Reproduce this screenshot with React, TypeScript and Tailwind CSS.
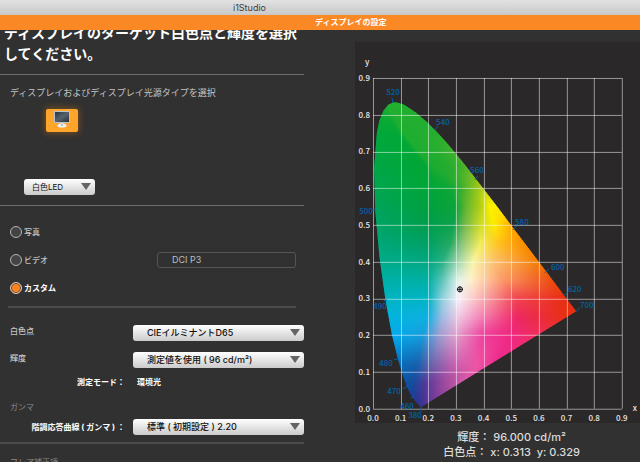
import type { ReactNode } from "react";
import clsx from "clsx";

type Point = [number, number];
type Stop = [number, string];

interface ColorRow {
  y: number;
  stops: Stop[];
}

// Plot area inside the 285x381 chart: 0.1 is 27.67 wide and 36.78 high.
const px = (x: number) => 18 + x * 276.7;
const py = (y: number) => 367 - y * 367.8;

// CIE 1931 spectral locus
const LOCUS: Point[] = [
  [0.1741, 0.005], [0.1714, 0.0051], [0.1644, 0.0109], [0.1566, 0.0177], [0.144, 0.0297],
  [0.1355, 0.0399], [0.1241, 0.0578], [0.1096, 0.0868], [0.0913, 0.1327], [0.0687, 0.2007],
  [0.0454, 0.295], [0.0235, 0.4127], [0.0082, 0.5384], [0.0039, 0.6548], [0.0139, 0.7502],
  [0.0235, 0.785], [0.0389, 0.812], [0.0555, 0.827], [0.0743, 0.8338], [0.094, 0.832],
  [0.1142, 0.8262], [0.1547, 0.8059], [0.1929, 0.7816], [0.2296, 0.7543], [0.2658, 0.7243],
  [0.3016, 0.6923], [0.3373, 0.6589], [0.3731, 0.6245], [0.4087, 0.5896], [0.4441, 0.5547],
  [0.4788, 0.5202], [0.5125, 0.4866], [0.5448, 0.4544], [0.5752, 0.4242], [0.627, 0.3725],
  [0.6658, 0.334], [0.6915, 0.3083], [0.7079, 0.292], [0.7347, 0.2653],
];

const ROWS: ColorRow[] = [
  { y: 0.84, stops: [[0, "#10ab34"], [0.03, "#1eae30"], [0.04, "#22b030"], [0.1, "#22b030"], [0.2, "#22b030"], [0.3, "#22b030"], [0.4, "#22b030"]] },
  { y: 0.75, stops: [[0, "#00a83a"], [0.09, "#02a836"], [0.11, "#1eae30"], [0.16, "#22ae30"], [0.2, "#22ae30"], [0.26, "#26ae2e"], [0.36, "#30b02c"]] },
  { y: 0.66, stops: [[0, "#00a646"], [0.19, "#02a634"], [0.21, "#1cac30"], [0.27, "#22ac30"], [0.32, "#3cb02c"], [0.36, "#6cba24"], [0.42, "#a0cc18"]] },
  { y: 0.6, stops: [[0, "#00a650"], [0.2, "#00a638"], [0.28, "#0ca636"], [0.32, "#38ac2e"], [0.36, "#7cbe22"], [0.4, "#b8d010"], [0.45, "#e8e400"]] },
  { y: 0.55, stops: [[0, "#00a45a"], [0.2, "#00a03e"], [0.3, "#0ca438"], [0.34, "#68b82e"], [0.39, "#b4d014"], [0.42, "#fcf000"], [0.48, "#fff000"]] },
  { y: 0.5, stops: [[0, "#00a568"], [0.2, "#009e4c"], [0.29, "#0ca24c"], [0.33, "#70b84c"], [0.39, "#d0dc24"], [0.44, "#ffec00"], [0.5, "#ffa800"]] },
  { y: 0.45, stops: [[0, "#00a87a"], [0.2, "#00a064"], [0.28, "#24aa60"], [0.32, "#88c47c"], [0.39, "#f4ec58"], [0.45, "#ffc424"], [0.54, "#fc9000"]] },
  { y: 0.4, stops: [[0, "#00ac8c"], [0.2, "#00a880"], [0.25, "#28b084"], [0.31, "#a4d8b0"], [0.36, "#f8f4a8"], [0.44, "#fcc070"], [0.6, "#f47c00"]] },
  { y: 0.35, stops: [[0, "#00b0a8"], [0.2, "#00b0a4"], [0.25, "#5cc4b8"], [0.31, "#e4f4ec"], [0.355, "#fff0cc"], [0.47, "#fc9868"], [0.65, "#ec4c0c"]] },
  { y: 0.3, stops: [[0, "#00b4c0"], [0.2, "#00b4c4"], [0.25, "#90d0dc"], [0.31, "#f8f0fa"], [0.37, "#fcc4c4"], [0.52, "#f04450"], [0.7, "#e82c10"]] },
  { y: 0.25, stops: [[0.05, "#00b4dc"], [0.2, "#10b0e0"], [0.25, "#a0bce4"], [0.31, "#f0c8e4"], [0.4, "#f47cb0"], [0.52, "#ee2864"], [0.7, "#e83010"]] },
  { y: 0.2, stops: [[0.06, "#00acf0"], [0.18, "#189cdc"], [0.24, "#9c9cd0"], [0.3, "#e0a0cc"], [0.4, "#f03c9c"], [0.5, "#ee2880"], [0.65, "#f03048"]] },
  { y: 0.12, stops: [[0.08, "#0070bc"], [0.16, "#1860ac"], [0.22, "#7464ac"], [0.3, "#cc60b0"], [0.38, "#f054a4"], [0.44, "#ee2c90"], [0.6, "#f03080"]] },
  { y: 0.07, stops: [[0.1, "#0058a4"], [0.15, "#1c489c"], [0.19, "#54389a"], [0.25, "#94489c"], [0.32, "#d05aaa"], [0.4, "#e856a4"], [0.6, "#ee3090"]] },
  { y: 0, stops: [[0.1, "#103c98"], [0.15, "#203490"], [0.17, "#363090"], [0.22, "#78389a"], [0.32, "#c050a4"], [0.4, "#e050a4"], [0.6, "#ee3090"]] },
];

const TICKS = [0, 0.1, 0.2, 0.3, 0.4, 0.5, 0.6, 0.7, 0.8, 0.9];

interface Wavelength {
  nm: number;
  label: Point;
  tick: [number, number, number, number];
}

const WAVELENGTHS: Wavelength[] = [
  { nm: 520, label: [38, 50], tick: [37, 56, 38, 61] },
  { nm: 540, label: [88, 80], tick: [83, 84, 80, 88] },
  { nm: 560, label: [122, 128], tick: [123, 134, 120, 138] },
  { nm: 580, label: [167, 180], tick: [162, 184, 158, 188] },
  { nm: 600, label: [203, 225], tick: [194, 227, 190, 231] },
  { nm: 620, label: [220, 247], tick: [213, 250, 209, 254] },
  { nm: 700, label: [232, 263], tick: [225, 266, 221, 270] },
  { nm: 500, label: [11, 169], tick: [17, 168, 20, 168] },
  { nm: 490, label: [25, 264], tick: [29, 259, 32, 258] },
  { nm: 480, label: [31, 321], tick: [39, 318, 43, 317] },
  { nm: 470, label: [39, 349], tick: [48, 347, 53, 344] },
  { nm: 460, label: [52, 364], tick: [56, 357, 59, 354] },
  { nm: 380, label: [60, 373], tick: [66, 370, 66, 365] },
];

function mix(a: string, b: string, t: number): string {
  const channel = (hex: string, i: number) => parseInt(hex.slice(i, i + 2), 16);
  const [r, g, bl] = [1, 3, 5].map((i) => Math.round(channel(a, i) + (channel(b, i) - channel(a, i)) * t));
  return `rgb(${r},${g},${bl})`;
}

function stopsAt(y: number): Stop[] {
  const next = ROWS.findIndex((row) => row.y <= y);
  if (next === 0) return ROWS[0].stops;
  if (next < 0) return ROWS[ROWS.length - 1].stops;
  const upper = ROWS[next - 1];
  const lower = ROWS[next];
  const t = (upper.y - y) / (upper.y - lower.y);
  return upper.stops.map(([x, color], i) => [
    x + (lower.stops[i][0] - x) * t,
    mix(color, lower.stops[i][1], t),
  ]);
}

const STRIPS = Array.from({ length: 155 }, (_, i) => {
  const top = 58 + i * 2;
  return { top, stops: stopsAt((367 - top - 1) / 367.8) };
});

function ChromaticityChart() {
  return (
    <svg
      viewBox="0 0 285 381"
      className="block w-full bg-[#2a2828]"
      fontFamily="'Noto Sans CJK JP', sans-serif"
      role="img"
      aria-label="CIE xy"
    >
      <defs>
        <clipPath id="locus">
          <polygon points={LOCUS.map(([x, y]) => `${px(x)},${py(y)}`).join(" ")} />
        </clipPath>
        {STRIPS.map(({ top, stops }) => (
          <linearGradient key={top} id={`strip-${top}`} gradientUnits="userSpaceOnUse" x1={px(0)} x2={px(0.8)} y1="0" y2="0">
            {stops.map(([x, color], i) => (
              <stop key={i} offset={x / 0.8} stopColor={color} />
            ))}
          </linearGradient>
        ))}
      </defs>

      <g clipPath="url(#locus)">
        {STRIPS.map(({ top }) => (
          <rect key={top} x="16" y={top} width="210" height="3" fill={`url(#strip-${top})`} />
        ))}
      </g>

      <g stroke="#ffffff" strokeOpacity="0.52">
        {TICKS.map((t) => (
          <g key={t}>
            <line x1={Math.round(px(t)) + 0.5} y1={py(0.9)} x2={Math.round(px(t)) + 0.5} y2={py(0)} />
            <line x1={px(0)} y1={Math.round(py(t)) + 0.5} x2={px(0.9)} y2={Math.round(py(t)) + 0.5} />
          </g>
        ))}
      </g>

      <g fill="#0560aa" stroke="#0560aa" fontSize="8" fontWeight="500" textAnchor="middle">
        {WAVELENGTHS.map(({ nm, label, tick }) => (
          <g key={nm}>
            <line x1={tick[0]} y1={tick[1]} x2={tick[2]} y2={tick[3]} />
            <text x={label[0]} y={label[1] + 3} stroke="none">
              {nm}
            </text>
          </g>
        ))}
      </g>

      <g fill="#e8e8e8" fontSize="8" fontWeight="500">
        {TICKS.map((t) => (
          <g key={t}>
            <text x="15" y={py(t) + 3} textAnchor="end">
              {t.toFixed(1)}
            </text>
            <text x={px(t)} y="379" textAnchor="middle">
              {t.toFixed(1)}
            </text>
          </g>
        ))}
        <text x="10" y="23">y</text>
        <text x="278" y="369">x</text>
      </g>

      <g fill="#ffffff" stroke="#101010">
        <circle cx="105" cy="247.5" r="2.5" />
        <path d="M102 247.5h6M105 244.5v6" />
      </g>
    </svg>
  );
}

interface PickerProps {
  id: string;
  label?: string;
  value: string;
  small?: boolean;
}

function Picker({ id, label, value, small }: PickerProps) {
  return (
    <div className={clsx("relative", small ? "w-[71px]" : "flex-1")}>
      <select
        id={id}
        aria-label={label}
        className={clsx(
          "block h-4 w-full appearance-none rounded-[3px] bg-linear-to-b from-white to-[#cbcbcb] leading-4 text-[#111]",
          small ? "pl-2 text-[8px]" : "pl-3.5 text-[9px] font-medium",
        )}
      >
        <option>{value}</option>
      </select>
      <svg viewBox="0 0 10 7" className="pointer-events-none absolute top-1 right-1 h-[7px] w-2.5">
        <path d="M0 0h10L5 7z" fill="#646464" />
      </svg>
    </div>
  );
}

interface ModeProps {
  label: string;
  checked?: boolean;
  children?: ReactNode;
}

function Mode({ label, checked, children }: ModeProps) {
  return (
    <div className="flex h-4 items-center justify-between">
      <label
        className={clsx(
          "flex items-center gap-0.5 text-[8px] leading-4",
          checked ? "font-bold text-white" : "font-medium text-[#c4c4c4]",
        )}
      >
        <input
          type="radio"
          name="mode"
          defaultChecked={checked}
          className="size-3 appearance-none rounded-full border border-[#b4b4b4] bg-[#444] checked:border-[#d8c8b8] checked:bg-[#fb8421] checked:shadow-[inset_0_0_0_1px_#5a4a40]"
        />
        {label}
      </label>
      {children}
    </div>
  );
}

function DisplayButton() {
  return (
    <button
      type="button"
      aria-label="ディスプレイ"
      className="mt-2.5 ml-[46px] flex h-[23px] w-8 justify-center rounded-xs bg-[#ffa52c] pt-0.5 shadow-[0_0_6px_1px_#7a5020]"
    >
      <svg viewBox="0 0 16 17" className="h-[17px] w-4">
        <defs>
          <linearGradient id="screen" x1="0" y1="0" x2="1" y2="1">
            <stop offset="0" stopColor="#2a3540" />
            <stop offset="0.5" stopColor="#55616e" />
            <stop offset="1" stopColor="#26303a" />
          </linearGradient>
        </defs>
        <rect width="16" height="12" rx="0.5" fill="#b9c3cc" />
        <rect x="1" y="1" width="14" height="10" fill="url(#screen)" />
        <path d="M6.5 12h3v1.5h-3z" fill="#cfd6dc" />
        <ellipse cx="8" cy="14.5" rx="4.5" ry="2" fill="#eef1f3" />
        <circle cx="8" cy="14" r="1" fill="#a8b4be" />
      </svg>
    </button>
  );
}

function SettingsPanel() {
  return (
    <form className="w-[47.5%] shrink-0 text-[8px] leading-3 text-[#c4c4c4]">
      <h1 className="-mt-2 mb-2.5 pl-1 text-[14px] leading-[21px] font-bold whitespace-nowrap text-white">
        ディスプレイのターゲット白色点と輝度を選択
        <br />
        してください。
      </h1>
      <hr className="border-[#6c6c6c]" />

      <p className="mt-3 pl-2.5 text-[9px] whitespace-nowrap">ディスプレイおよびディスプレイ光源タイプを選択</p>
      <DisplayButton />
      <div className="mt-[47px] mb-2.5 pl-6">
        <Picker id="backlight" label="光源タイプ" value="白色LED" small />
      </div>
      <hr className="border-[#6c6c6c]" />

      <div className="mt-[18px] mb-2.5 flex flex-col gap-3 pr-2 pl-2.5">
        <Mode label="写真" />
        <Mode label="ビデオ">
          <select
            disabled
            aria-label="ビデオ"
            className="h-4 w-[139px] appearance-none rounded-[3px] border border-[#555] pl-3.5 text-[9px] leading-3 text-[#bcbcbc] opacity-100"
          >
            <option>DCI P3</option>
          </select>
        </Mode>
        <Mode label="カスタム" checked />
      </div>
      <hr className="mr-2 ml-2 border-t-2 border-[#4c4c4c]" />

      <div className="mt-[17px] flex h-4 items-start pl-2.5">
        <label htmlFor="white-point" className="w-[123px] font-medium">白色点</label>
        <Picker id="white-point" value="CIEイルミナントD65" />
      </div>
      <div className="mt-[11px] flex h-4 items-start pl-2.5">
        <label htmlFor="luminance" className="w-[123px] font-medium">輝度</label>
        <Picker id="luminance" value="測定値を使用 ( 96 cd/m²)" />
      </div>
      <div className="mt-2 flex font-bold text-white">
        <span className="w-[133px] pr-2 text-right">測定モード：</span>
        <span className="pl-1">環境光</span>
      </div>

      <p className="mt-[13px] pl-2.5 text-[#8c8c8c]">ガンマ</p>
      <div className="mt-1.5 mb-[7px] flex h-4 items-center">
        <label htmlFor="gamma" className="w-[133px] pr-2 text-right font-bold text-white">
          階調応答曲線 ( ガンマ ) ：
        </label>
        <Picker id="gamma" value="標準 ( 初期設定 ) 2.20" />
      </div>
      <hr className="border-t-2 border-[#4c4c4c]" />
      <p className="mt-3 pl-2.5 text-[#8c8c8c]">フレア補正項</p>
    </form>
  );
}

export default function App() {
  return (
    <div className="flex h-screen flex-col overflow-hidden bg-[#313131] font-[Inter,'Noto_Sans_CJK_JP',sans-serif]">
      <header className="shrink-0">
        <div className="h-[15px] bg-linear-to-b from-[#e2e2e2] to-[#c8c8c8] pl-[233px] text-[9px] leading-4 text-[#3c3c3c]">
          i1Studio
        </div>
        <div className="h-[15px] bg-[#fa8825] pl-[315px] text-[8px] leading-[15px] font-bold text-white">
          ディスプレイの設定
        </div>
      </header>
      <main className="flex min-h-0 flex-1 justify-between overflow-hidden">
        <SettingsPanel />
        <section className="w-[44.5%] shrink-0 pt-3">
          <ChromaticityChart />
          <div className="pt-[7px] pl-7 text-center text-[11px] leading-[15px] font-medium text-[#dcdcdc]">
            <p>輝度： 96.000 cd/m²</p>
            <p>白色点： x: 0.313&nbsp; y: 0.329</p>
          </div>
        </section>
      </main>
    </div>
  );
}
